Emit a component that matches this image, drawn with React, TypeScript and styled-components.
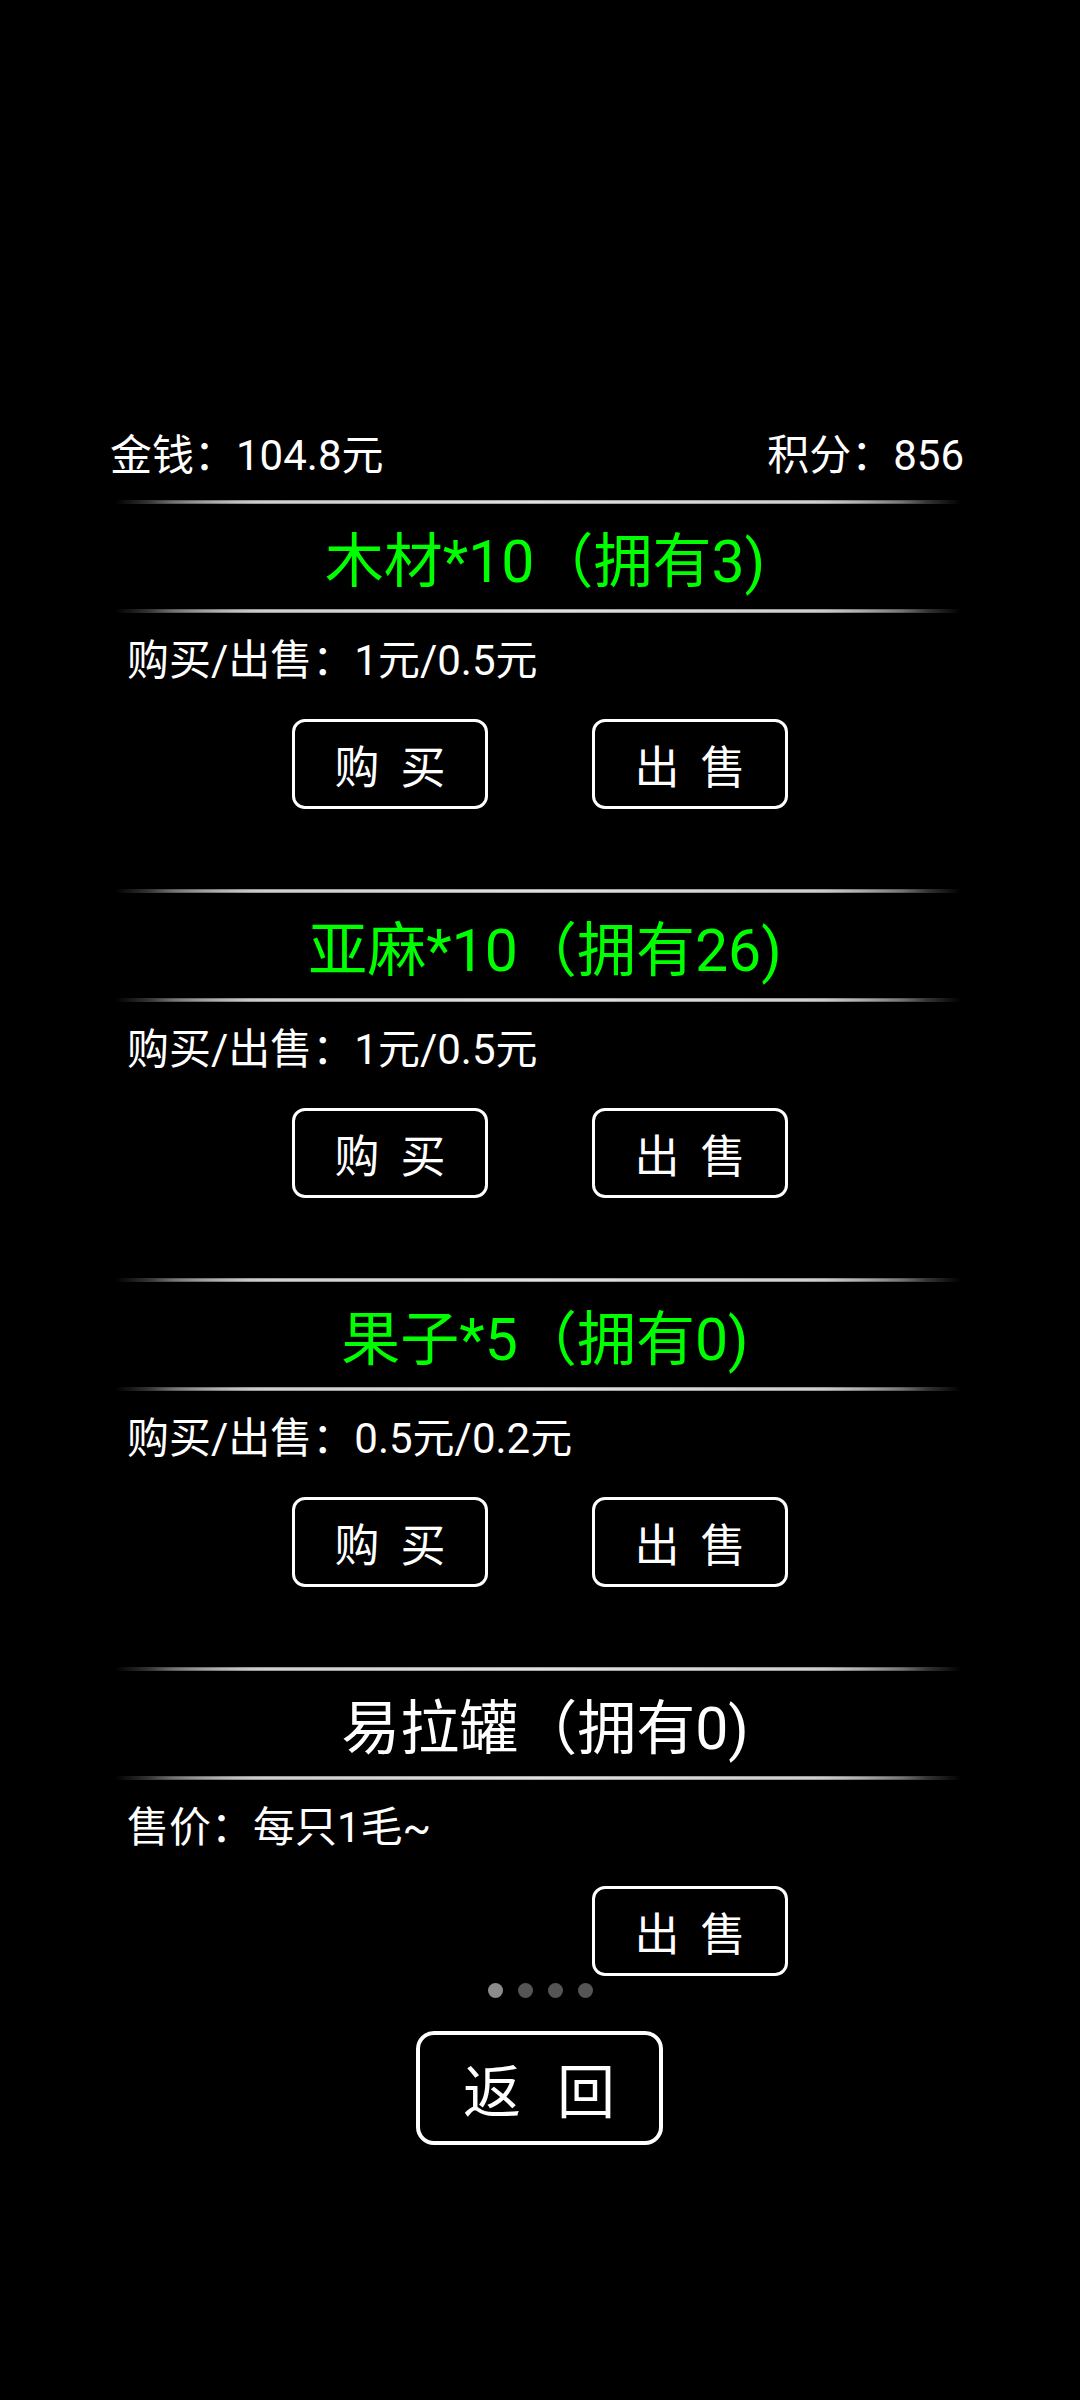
import React from "react";
import styled, { createGlobalStyle } from "styled-components";

const Global = createGlobalStyle`
  html, body { margin: 0; padding: 0; background: #000; }
  body { font-family: Roboto, "Noto Sans CJK SC", "Noto Sans", sans-serif; }
`;

const Page = styled.div`
  width: 1080px;
  height: 2400px;
  background: #000;
  color: #fff;
  padding-top: 426px;
  box-sizing: border-box;
  display: flex;
  flex-direction: column;
`;

const Header = styled.div`
  display: flex;
  justify-content: space-between;
  padding: 0 116px 0 110px;
  height: 60px;
  line-height: 60px;
  font-size: 42px;
  margin-bottom: 14px;
`;

const Section = styled.section`
  display: flex;
  flex-direction: column;
  padding: 0 119px 80px 115px;
`;

const Divider = styled.div`
  position: relative;
  height: 4px;
  background: linear-gradient(
    to right,
    rgba(150, 150, 150, 0) 0%,
    rgba(150, 150, 150, 0.6) 7%,
    #9a9a9a 16%,
    #a8a8a8 50%,
    #9a9a9a 84%,
    rgba(150, 150, 150, 0.6) 93%,
    rgba(150, 150, 150, 0) 100%
  );
  &::after {
    content: "";
    position: absolute;
    left: 4%;
    right: 4%;
    top: 1px;
    height: 2px;
    background: linear-gradient(
      to right,
      rgba(220, 220, 220, 0) 0%,
      #cfcfcf 15%,
      #e0e0e0 50%,
      #cfcfcf 85%,
      rgba(220, 220, 220, 0) 100%
    );
  }
`;

const Title = styled.div<{ $green: boolean }>`
  height: 105px;
  display: flex;
  align-items: center;
  justify-content: center;
  padding-left: 14px;
  font-size: 59px;
  color: ${(p) => (p.$green ? "#00ff00" : "#ffffff")};
`;

const Price = styled.div`
  margin-top: 18px;
  height: 60px;
  line-height: 60px;
  font-size: 42px;
  padding-left: 12px;
`;

const ButtonRow = styled.div`
  margin-top: 28px;
  display: flex;
  justify-content: center;
  gap: 104px;
  padding-left: 4px;
`;

const ActionButton = styled.button<{ $hidden?: boolean }>`
  width: 196px;
  height: 90px;
  box-sizing: border-box;
  border: 3px solid #fff;
  border-radius: 13px;
  background: #000;
  color: #fff;
  font-family: Roboto, "Noto Sans CJK SC", sans-serif;
  font-size: 45px;
  display: flex;
  align-items: center;
  justify-content: center;
  gap: 21px;
  padding: 0;
  visibility: ${(p) => (p.$hidden ? "hidden" : "visible")};
`;

const Dots = styled.div`
  margin-top: -73px;
  height: 15px;
  display: flex;
  justify-content: center;
  gap: 15px;
`;

const Dot = styled.span<{ $active: boolean }>`
  width: 15px;
  height: 15px;
  border-radius: 50%;
  background: ${(p) => (p.$active ? "#8c8c8c" : "#555555")};
`;

const ReturnButton = styled.button`
  align-self: center;
  margin-top: 33px;
  margin-left: -2px;
  width: 247px;
  height: 114px;
  box-sizing: border-box;
  border: 4px solid #fff;
  border-radius: 18px;
  background: #000;
  color: #fff;
  font-family: Roboto, "Noto Sans CJK SC", sans-serif;
  font-size: 58px;
  display: flex;
  align-items: center;
  justify-content: center;
  gap: 36px;
  padding: 0;
`;

const Label = ({ text }: { text: string }) => (
  <>
    {text.split("").map((c, i) => (
      <span key={i}>{c}</span>
    ))}
  </>
);

type Item = { title: string; price: string; green: boolean; canBuy: boolean };

const items: Item[] = [
  { title: "木材*10（拥有3)", price: "购买/出售：1元/0.5元", green: true, canBuy: true },
  { title: "亚麻*10（拥有26)", price: "购买/出售：1元/0.5元", green: true, canBuy: true },
  { title: "果子*5（拥有0)", price: "购买/出售：0.5元/0.2元", green: true, canBuy: true },
  { title: "易拉罐（拥有0)", price: "售价：每只1毛~", green: false, canBuy: false },
];

export default function App() {
  return (
    <>
      <Global />
      <Page>
        <Header>
          <span>金钱：104.8元</span>
          <span>积分：856</span>
        </Header>
        {items.map((it, i) => (
          <Section key={i}>
            <Divider />
            <Title $green={it.green}>{it.title}</Title>
            <Divider />
            <Price>{it.price}</Price>
            <ButtonRow>
              <ActionButton $hidden={!it.canBuy}>
                <Label text="购买" />
              </ActionButton>
              <ActionButton>
                <Label text="出售" />
              </ActionButton>
            </ButtonRow>
          </Section>
        ))}
        <Dots>
          {[0, 1, 2, 3].map((d) => (
            <Dot key={d} $active={d === 0} />
          ))}
        </Dots>
        <ReturnButton>
          <Label text="返回" />
        </ReturnButton>
      </Page>
    </>
  );
}
